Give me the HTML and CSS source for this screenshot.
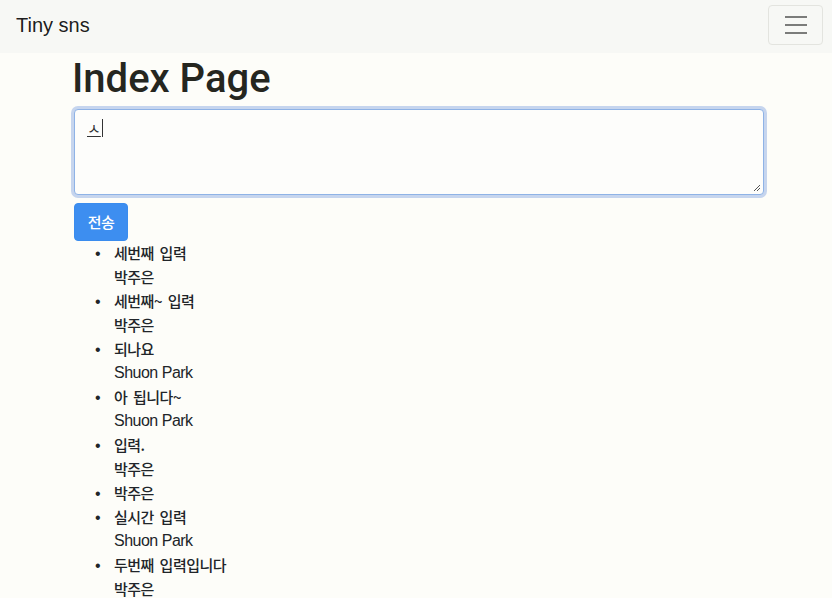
FILE: index.html
```html
<!DOCTYPE html>
<html lang="ko">
<head>
<meta charset="utf-8">
<title>Tiny sns</title>
<link rel="stylesheet" href="styles.css">
</head>
<body>
<nav class="navbar">
  <span class="brand">Tiny sns</span>
  <button class="toggler" type="button" aria-label="Toggle navigation">
    <svg class="toggler-icon" viewBox="0 0 30 30" width="30" height="30"><path d="M4 7h22M4 15h22M4 23h22" stroke="rgba(0,0,0,.5)" stroke-width="2" stroke-linecap="butt" fill="none"/></svg>
  </button>
</nav>
<main class="container">
  <h1 class="title">Index Page</h1>
  <form class="post-form">
    <div class="textarea">
      <span class="composing">ㅅ</span><span class="caret"></span>
      <svg class="resize" viewBox="0 0 10 10" width="10" height="10"><path d="M9 3L3 9M9 6L6 9" stroke="#555" stroke-width="1" fill="none"/></svg>
    </div>
    <button class="btn" type="button"><span class="ko">전송</span></button>
  </form>
  <ul class="posts">
    <li><div class="ko">세번째 입력</div><div class="ko">박주은</div></li>
    <li><div class="ko">세번째~ 입력</div><div class="ko">박주은</div></li>
    <li><div class="ko">되나요</div><div class="en">Shuon Park</div></li>
    <li><div class="ko">아 됩니다~</div><div class="en">Shuon Park</div></li>
    <li><div class="ko">입력.</div><div class="ko">박주은</div></li>
    <li><div class="ko">박주은</div></li>
    <li><div class="ko">실시간 입력</div><div class="en">Shuon Park</div></li>
    <li><div class="ko">두번째 입력입니다</div><div class="ko">박주은</div></li>
  </ul>
</main>
</body>
</html>
```

FILE: styles.css
```css
html, body {
  margin: 0;
  padding: 0;
}
body {
  background: #fdfdf9;
  color: #212529;
  font-family: "Liberation Sans", "Noto Sans CJK KR", sans-serif;
  font-size: 16px;
  line-height: 24px;
  overflow: hidden;
}
.navbar {
  height: 53px;
  box-sizing: border-box;
  padding: 5px 9px 8px 16px;
  background: #f7f8f5;
  display: flex;
  align-items: center;
  justify-content: space-between;
}
.brand {
  font-size: 20px;
  line-height: 30px;
  color: rgba(0,0,0,.9);
}
.toggler {
  width: 55px;
  height: 40px;
  box-sizing: border-box;
  border: 1px solid #e3e4df;
  border-radius: 4px;
  background: transparent;
  padding: 0;
  display: flex;
  align-items: center;
  justify-content: center;
}
.toggler-icon {
  display: block;
}
.container {
  max-width: 720px;
  margin: 0 auto;
  padding: 0 12px 0 18px;
  box-sizing: border-box;
}
.title {
  font-family: Roboto, "Liberation Sans", sans-serif;
  font-size: 40px;
  line-height: 48px;
  font-weight: 500;
  margin: 0 0 6px -2px;
  padding-top: 2px;
  color: #25261f;
}
.post-form {
  margin: 0;
}
.textarea {
  position: relative;
  height: 86px;
  box-sizing: border-box;
  border: 1px solid #8fb3e6;
  border-radius: 4px;
  padding: 6px 12px;
  background: #fdfdfb;
  box-shadow: 0 0 0 3px #c6d5ee;
  margin-bottom: 8px;
  display: flex;
  align-items: flex-start;
}
.composing {
  font-family: "Noto Sans CJK KR", sans-serif;
  font-size: 15px;
  line-height: 24px;
  text-decoration: underline;
  text-underline-offset: 2px;
  color: #333;
}
.caret {
  width: 1px;
  height: 18px;
  margin-top: 3px;
  margin-left: 1px;
  background: #333;
}
.resize {
  position: absolute;
  right: 2px;
  bottom: 2px;
}
.btn {
  display: block;
  height: 38px;
  width: 54px;
  padding: 0;
  border: 1px solid #3a8cee;
  border-radius: 4px;
  background: #3d8ef0;
  color: #fff;
  font-size: 16px;
  line-height: 24px;
}
.posts {
  margin: 0;
  padding-left: 40px;
  list-style: disc;
}
.posts li {
  line-height: 24px;
}
.posts li::marker {
  content: "\2022\00a0\00a0\00a0";
}
.ko {
  font-family: "Noto Sans CJK KR", sans-serif;
  font-size: 15px;
  font-weight: 500;
  letter-spacing: -0.5px;
  word-spacing: 2px;
}
.en {
  letter-spacing: -0.5px;
}
```
